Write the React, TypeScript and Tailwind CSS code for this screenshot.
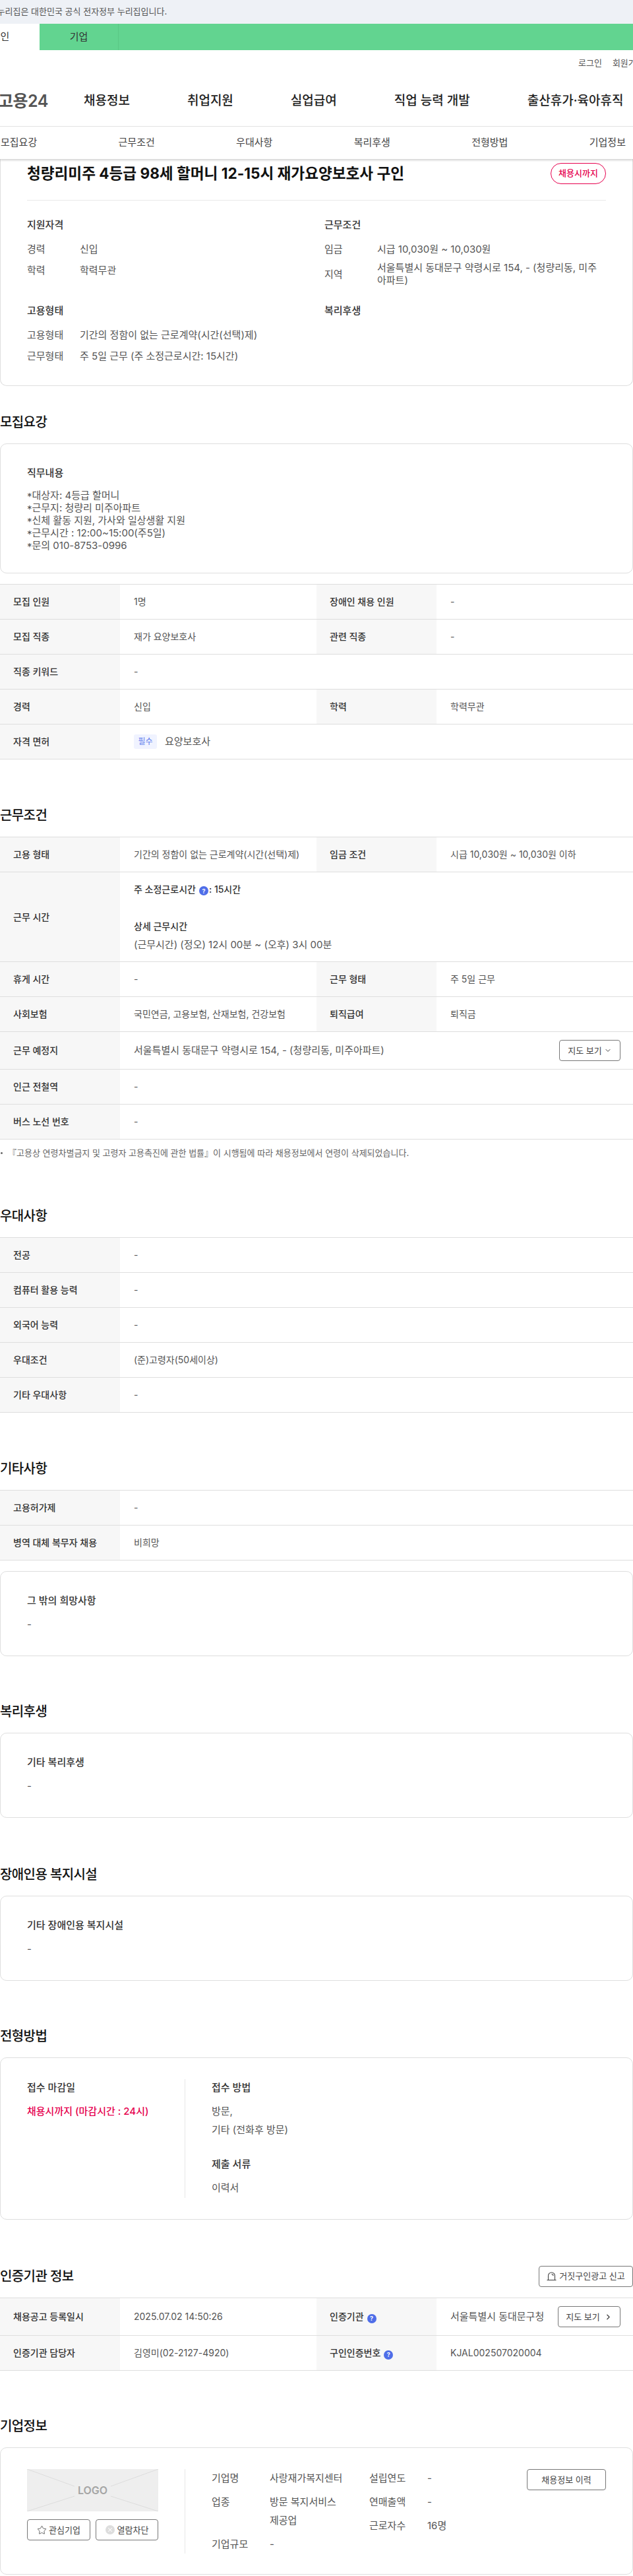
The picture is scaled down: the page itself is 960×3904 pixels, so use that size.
import { ChevronDown, ChevronRight, Star, X } from "lucide-react";
import type { ReactNode } from "react";

const Help = () => (
  <span className="mr-[1px] ml-[5px] inline-flex h-[14px] w-[14px] items-center justify-center rounded-full bg-[#4f6ee8] align-[-1px] text-[9px] leading-none font-bold text-white">
    ?
  </span>
);

function Th({ children }: { children: ReactNode }) {
  return <div className="flex items-center bg-[#f7f7f7] pl-[20px] font-medium text-[#333]">{children}</div>;
}

function Td({ children, wide }: { children: ReactNode; wide?: boolean }) {
  return <div className={`flex items-center pl-[21px] text-[#555] ${wide ? "col-span-3" : ""}`}>{children}</div>;
}

// one table row: two label/value pairs, or a single wide one
function Row({ cells, h = "h-[53px]" }: { cells: [ReactNode, ReactNode][]; h?: string }) {
  return (
    <div className={`grid grid-cols-[182px_298px_182px_1fr] border-b border-[#dedede] text-[14px] leading-[20px] ${h}`}>
      {cells.map(([label, value], i) => (
        <div key={i} className="contents">
          <Th>{label}</Th>
          <Td wide={cells.length === 1}>{value}</Td>
        </div>
      ))}
    </div>
  );
}

function Section({ title, gap = "mt-[70px]", right, children }: { title: string; gap?: string; right?: ReactNode; children: ReactNode }) {
  return (
    <section className={gap}>
      <div className="mb-[16px] flex h-[32px] items-center justify-between">
        <h2 className="text-[20px] leading-[32px] font-medium tracking-[-0.6px] text-[#111]">{title}</h2>
        {right}
      </div>
      {children}
    </section>
  );
}

function Table({ children }: { children: ReactNode }) {
  return <div className="border-t border-[#dedede]">{children}</div>;
}

function TextCard({ label, value }: { label: string; value: string }) {
  return (
    <div className="rounded-[10px] border border-[#dedede] px-[40px] pt-[32px] pb-[35px] text-[15px]">
      <div className="mb-[12px] leading-[24px] font-medium text-[#333]">{label}</div>
      <div className="leading-[24px] text-[#555]">{value}</div>
    </div>
  );
}

function Info({ label, children, tall }: { label: string; children: ReactNode; tall?: boolean }) {
  return (
    <div className={`flex text-[15px] text-[#555] ${tall ? "leading-[19px]" : "leading-[28px]"}`}>
      <div className={`w-[80px] shrink-0 ${tall ? "self-center" : ""}`}>{label}</div>
      <div className={tall ? "max-w-[342px]" : ""}>{children}</div>
    </div>
  );
}

function Company({ label, value }: { label: string; value: ReactNode }) {
  return (
    <div className="flex">
      <div className="w-[88px] shrink-0">{label}</div>
      <div className="w-[124px]">{value}</div>
    </div>
  );
}

// job description line, the asterisk sits at mid height in the reference
const JobLine = ({ children }: { children: ReactNode }) => (
  <div>
    <span className="relative top-[2px]">*</span>
    {children}
  </div>
);

export default function App() {
  return (
    <div className="w-[960px] overflow-hidden bg-white font-['Inter','Noto_Sans_CJK_KR',sans-serif]">
      {/* top notice */}
      <div className="flex h-[36px] items-center bg-[#eef1f6] text-[13px] text-[#555]">
        <span className="-ml-[20px] whitespace-nowrap">이 누리집은 대한민국 공식 전자정부 누리집입니다.</span>
      </div>
      <div className="flex h-[40px] bg-[#62d490] text-[15px] text-[#333]">
        <div className="-ml-[59px] flex w-[119px] shrink-0 items-center justify-center bg-white">개인</div>
        <div className="flex w-[120px] shrink-0 items-center justify-center border-r border-[#5ac785]">기업</div>
      </div>

      {/* header */}
      <div className="flex h-[40px] items-center gap-[16px] pl-[877px] text-[13px] whitespace-nowrap text-[#555]">
        <span className="shrink-0">로그인</span>
        <span className="shrink-0">회원가입</span>
      </div>
      <div className="flex h-[76px] items-center border-b border-[#e4e4e4] text-[19px] font-medium whitespace-nowrap text-[#222]">
        <span className="-ml-[3px] w-[130px] shrink-0 text-[25px] font-semibold tracking-[-0.5px] text-[#555]">고용24</span>
        <div className="flex gap-[87px]">
          <span>채용정보</span>
          <span>취업지원</span>
          <span>실업급여</span>
          <span>직업 능력 개발</span>
          <span>출산휴가·육아휴직</span>
        </div>
      </div>
      <div className="relative z-10 flex h-[49px] items-center justify-between bg-white pr-[11px] pl-[1px] text-[15px] text-[#444] shadow-[0_2px_3px_rgba(0,0,0,0.18)]">
        {["모집요강", "근무조건", "우대사항", "복리후생", "전형방법", "기업정보"].map((t) => (
          <span key={t}>{t}</span>
        ))}
      </div>

      {/* summary */}
      <div className="rounded-b-[10px] border-x border-b border-[#dedede] px-[40px] pt-[6px] pb-[30px]">
        <div className="mb-[24px] flex items-center justify-between">
          <h1 className="text-[22.6px] leading-[32px] font-bold text-[#111]">
            청량리미주 4등급 98세 할머니 12-15시 재가요양보호사 구인
          </h1>
          <span className="flex h-[32px] w-[84px] items-center justify-center rounded-full border border-[#e6004e] text-[13px] font-medium text-[#e6004e]">
            채용시까지
          </span>
        </div>
        <div className="grid grid-cols-[451px_1fr] gap-y-[25px] border-t border-[#e8e8e8] pt-[25px]">
          <div>
            <h3 className="mb-[11px] text-[15px] leading-[24px] font-medium text-[#333]">지원자격</h3>
            <div className="flex flex-col gap-[4px]">
              <Info label="경력">신입</Info>
              <Info label="학력">학력무관</Info>
            </div>
          </div>
          <div>
            <h3 className="mb-[11px] text-[15px] leading-[24px] font-medium text-[#333]">근무조건</h3>
            <div className="flex flex-col gap-[4px]">
              <Info label="임금">시급 10,030원 ~ 10,030원</Info>
              <Info label="지역" tall>
                서울특별시 동대문구 약령시로 154, - (청량리동, 미주아파트)
              </Info>
            </div>
          </div>
          <div>
            <h3 className="mb-[11px] text-[15px] leading-[24px] font-medium text-[#333]">고용형태</h3>
            <div className="flex flex-col gap-[4px]">
              <Info label="고용형태">기간의 정함이 없는 근로계약(시간(선택)제)</Info>
              <Info label="근무형태">주 5일 근무 (주 소정근로시간: 15시간)</Info>
            </div>
          </div>
          <div>
            <h3 className="mb-[11px] text-[15px] leading-[24px] font-medium text-[#333]">복리후생</h3>
          </div>
        </div>
      </div>

      <Section title="모집요강" gap="mt-[39px]">
        <div className="mb-[16px] rounded-[10px] border border-[#dedede] px-[40px] py-[32px] text-[15px]">
          <div className="mb-[12px] leading-[24px] font-medium text-[#333]">직무내용</div>
          <div className="leading-[19px] text-[#555]">
            <JobLine>대상자: 4등급 할머니</JobLine>
            <JobLine>근무지: 청량리 미주아파트</JobLine>
            <JobLine>신체 활동 지원, 가사와 일상생활 지원</JobLine>
            <JobLine>근무시간 : 12:00~15:00(주5일)</JobLine>
            <JobLine>문의 010-8753-0996</JobLine>
          </div>
        </div>
        <Table>
          <Row cells={[["모집 인원", "1명"], ["장애인 채용 인원", "-"]]} />
          <Row cells={[["모집 직종", "재가 요양보호사"], ["관련 직종", "-"]]} />
          <Row cells={[["직종 키워드", "-"]]} />
          <Row cells={[["경력", "신입"], ["학력", "학력무관"]]} />
          <Row
            cells={[
              [
                "자격 면허",
                <span className="flex items-center gap-[12px]">
                  <span className="flex h-[22px] w-[35px] items-center justify-center rounded-[3px] bg-[#f0f3ff] text-[12px] text-[#5d7bec]">필수</span>
                  <span className="text-[15px]">요양보호사</span>
                </span>,
              ],
            ]}
          />
        </Table>
      </Section>

      <Section title="근무조건" gap="mt-[69px]">
        <Table>
          <Row cells={[["고용 형태", "기간의 정함이 없는 근로계약(시간(선택)제)"], ["임금 조건", "시급 10,030원 ~ 10,030원 이하"]]} />
          <Row
            h="h-[136px]"
            cells={[
              [
                "근무 시간",
                <div className="leading-[28px]">
                  <div className="font-medium text-[#333]">
                    주 소정근로시간<Help />: 15시간
                  </div>
                  <div className="mt-[28px] font-medium text-[#333]">상세 근무시간</div>
                  <div className="text-[15px]">(근무시간) (정오) 12시 00분 ~ (오후) 3시 00분</div>
                </div>,
              ],
            ]}
          />
          <Row cells={[["휴게 시간", "-"], ["근무 형태", "주 5일 근무"]]} />
          <Row cells={[["사회보험", "국민연금, 고용보험, 산재보험, 건강보험"], ["퇴직급여", "퇴직금"]]} />
          <Row
            h="h-[57px]"
            cells={[
              [
                "근무 예정지",
                <div className="flex w-full items-center justify-between pr-[19px]">
                  <span className="text-[15px]">서울특별시 동대문구 약령시로 154, - (청량리동, 미주아파트)</span>
                  <button className="flex h-[32px] w-[93px] items-center justify-center gap-[3px] rounded-[4px] border border-[#777] text-[13px] text-[#444]">
                    지도 보기
                    <ChevronDown size={12} />
                  </button>
                </div>,
              ],
            ]}
          />
          <Row cells={[["인근 전철역", "-"]]} />
          <Row cells={[["버스 노선 번호", "-"]]} />
        </Table>
        <p className="mt-[10px] flex items-center gap-[8px] text-[13px] leading-[20px] text-[#666]">
          <span className="ml-[1px] h-[3px] w-[3px] rounded-full bg-[#666]" />
          『고용상 연령차별금지 및 고령자 고용촉진에 관한 법률』이 시행됨에 따라 채용정보에서 연령이 삭제되었습니다.
        </p>
      </Section>

      <Section title="우대사항">
        <Table>
          <Row cells={[["전공", "-"]]} />
          <Row cells={[["컴퓨터 활용 능력", "-"]]} />
          <Row cells={[["외국어 능력", "-"]]} />
          <Row cells={[["우대조건", "(준)고령자(50세이상)"]]} />
          <Row cells={[["기타 우대사항", "-"]]} />
        </Table>
      </Section>

      <Section title="기타사항" gap="mt-[69px]">
        <Table>
          <Row cells={[["고용허가제", "-"]]} />
          <Row cells={[["병역 대체 복무자 채용", "비희망"]]} />
        </Table>
        <div className="mt-[16px]">
          <TextCard label="그 밖의 희망사항" value="-" />
        </div>
      </Section>

      <Section title="복리후생" gap="mt-[68px]">
        <TextCard label="기타 복리후생" value="-" />
      </Section>

      <Section title="장애인용 복지시설">
        <TextCard label="기타 장애인용 복지시설" value="-" />
      </Section>

      <Section title="전형방법" gap="mt-[68px]">
        <div className="rounded-[10px] border border-[#dedede] px-[40px] py-[32px] text-[15px] text-[#555]">
          <div className="flex h-[180px]">
            <div className="w-[240px] shrink-0 border-r border-[#e8e8e8] pt-[1px]">
              <div className="mb-[12px] leading-[24px] font-medium text-[#333]">접수 마감일</div>
              <div className="leading-[24px] font-medium text-[#e6004e]">채용시까지 (마감시간 : 24시)</div>
            </div>
            <div className="pt-[1px] pl-[40px]">
              <div className="mb-[10px] leading-[24px] font-medium text-[#333]">접수 방법</div>
              <div className="leading-[28px]">
                <div>방문,</div>
                <div>기타 (전화후 방문)</div>
              </div>
              <div className="mt-[26px] mb-[12px] leading-[24px] font-medium text-[#333]">제출 서류</div>
              <div className="leading-[24px]">이력서</div>
            </div>
          </div>
        </div>
      </Section>

      <Section
        title="인증기관 정보"
        right={
          <button className="flex h-[32px] w-[143px] items-center justify-center gap-[4px] rounded-[4px] border border-[#777] text-[13px] text-[#444]">
            <svg width="15" height="14" viewBox="0 0 15 14" fill="none" stroke="#444" strokeWidth="1.1">
              <path d="M2.5 12.5V6a5 5 0 0 1 10 0v6.5" />
              <path d="M0.5 12.5h14" />
              <path d="M7.5 3.5a2.5 2.5 0 0 1 2.5 2.5" />
            </svg>
            거짓구인광고 신고
          </button>
        }
      >
        <Table>
          <Row
            h="h-[57px]"
            cells={[
              ["채용공고 등록일시", "2025.07.02 14:50:26"],
              [
                <span>인증기관<Help /></span>,
                <div className="flex w-full items-center justify-between pr-[19px]">
                  <span className="text-[15px]">서울특별시 동대문구청</span>
                  <button className="flex h-[32px] w-[95px] items-center justify-center gap-[6px] rounded-[4px] border border-[#777] text-[13px] text-[#444]">
                    지도 보기
                    <ChevronRight size={13} strokeWidth={2.4} />
                  </button>
                </div>,
              ],
            ]}
          />
          <Row
            cells={[
              ["인증기관 담당자", "김영미(02-2127-4920)"],
              [<span>구인인증번호<Help /></span>, "KJAL002507020004"],
            ]}
          />
        </Table>
      </Section>

      <Section title="기업정보" gap="mt-[68px]">
        <div className="flex rounded-[10px] border border-[#dedede] px-[40px] pt-[32px] pb-[31px] text-[15px] leading-[28px] text-[#555]">
          <div className="h-[128px] w-[240px] shrink-0 border-r border-[#e8e8e8]">
            <div className="relative flex h-[64px] w-[199px] items-center justify-center bg-[#eeeeee]">
              <svg className="absolute inset-0" width="199" height="64" viewBox="0 0 199 64" stroke="#dcdcdc" strokeWidth="1">
                <path d="M0 0L72 26M199 0L127 26M0 64L72 41M199 64L127 41" />
              </svg>
              <span className="relative text-[16px] font-semibold text-[#a5a5a5]">LOGO</span>
            </div>
            <div className="mt-[12px] flex w-[199px] justify-between">
              <button className="flex h-[32px] w-[96px] items-center justify-center gap-[3px] rounded-[4px] border border-[#777] text-[13px] text-[#444]">
                <Star size={15} strokeWidth={1.3} />
                관심기업
              </button>
              <button className="flex h-[32px] w-[95px] items-center justify-center gap-[4px] rounded-[4px] border border-[#777] text-[13px] text-[#444]">
                <span className="flex h-[14px] w-[14px] items-center justify-center rounded-full bg-[#ddd]">
                  <X size={10} color="#fff" strokeWidth={2.5} />
                </span>
                열람차단
              </button>
            </div>
          </div>
          <div className="flex w-[239px] shrink-0 flex-col gap-[8px] pl-[40px]">
            <Company label="기업명" value="사랑재가복지센터" />
            <Company label="업종" value="방문 복지서비스 제공업" />
            <Company label="기업규모" value="-" />
          </div>
          <div className="ml-[40px] flex w-[239px] flex-col gap-[8px]">
            <div className="flex"><div className="w-[88px]">설립연도</div><div>-</div></div>
            <div className="flex"><div className="w-[88px]">연매출액</div><div>-</div></div>
            <div className="flex"><div className="w-[88px]">근로자수</div><div>16명</div></div>
          </div>
          <button className="ml-auto flex h-[32px] w-[120px] shrink-0 items-center justify-center rounded-[4px] border border-[#777] text-[13px] text-[#444]">
            채용정보 이력
          </button>
        </div>
      </Section>
    </div>
  );
}
